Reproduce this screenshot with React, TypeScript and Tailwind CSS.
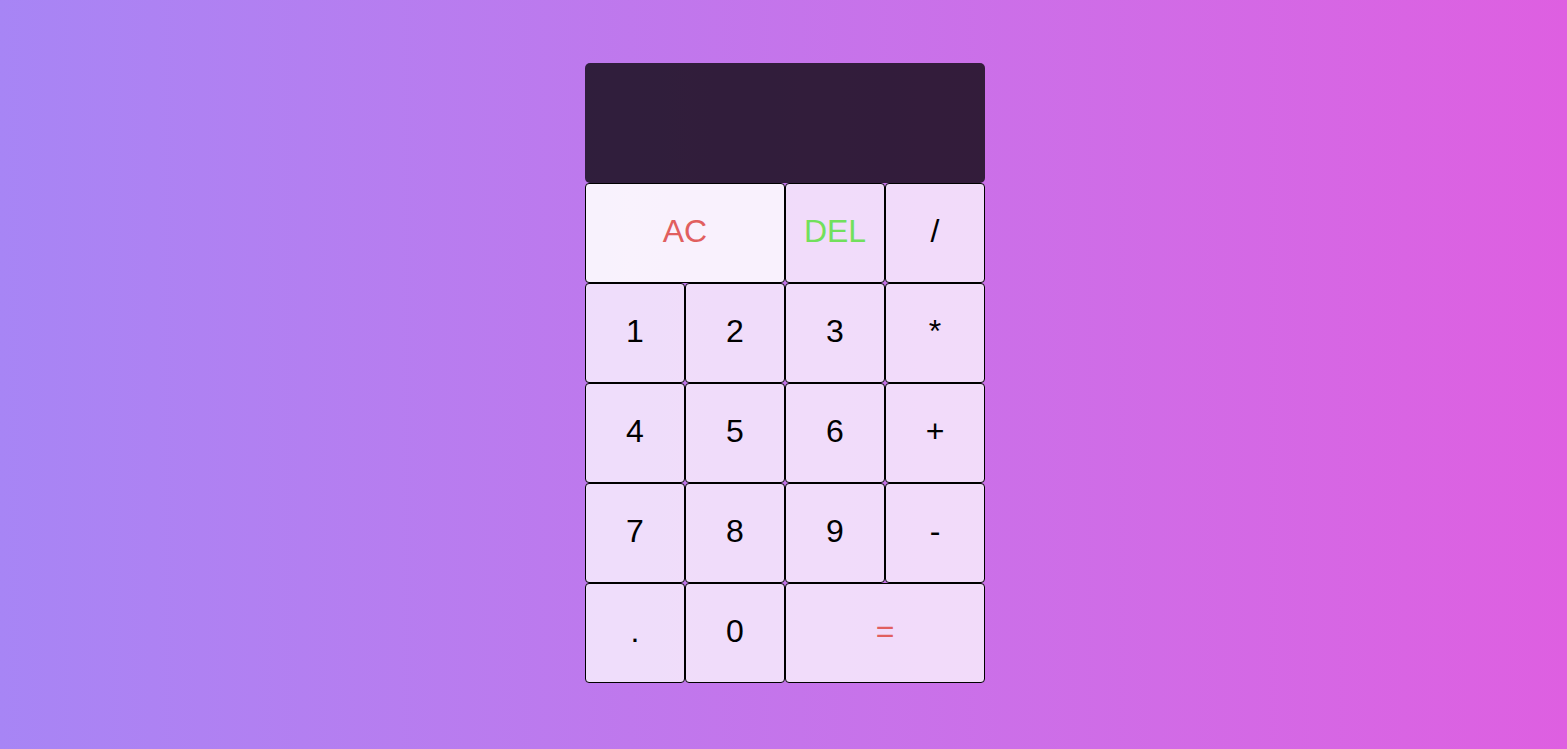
import React from 'react';

interface KeyProps {
  label: string;
  span?: boolean;
  tone?: 'red' | 'green';
  active?: boolean;
}

const Key: React.FC<KeyProps> = ({ label, span, tone, active }) => (
  <button
    className={[
      'border border-black rounded-[4px] text-[32px] leading-none pb-[4px] cursor-pointer outline-none',
      span ? 'col-span-2' : '',
      active ? 'bg-white/90' : 'bg-white/75',
      tone === 'red' ? 'text-[#e15f5f]' : tone === 'green' ? 'text-[#72e05c]' : 'text-black',
    ].join(' ')}
  >
    {label}
  </button>
);

const App: React.FC = () => {
  return (
    <div
      className="min-h-screen w-full flex items-start justify-center pt-[63px] pl-[3px] bg-gradient-to-r from-[#a785f5] to-[#de5fe1]"
      style={{ fontFamily: '"Liberation Sans", Arial, sans-serif' }}
    >
      <div className="grid grid-cols-[repeat(4,100px)] grid-rows-[120px_repeat(5,100px)]">
        {/* Display */}
        <div className="col-span-4 bg-black/75 rounded-[5px]"></div>

        <Key label="AC" span tone="red" active />
        <Key label="DEL" tone="green" />
        <Key label="/" />

        <Key label="1" />
        <Key label="2" />
        <Key label="3" />
        <Key label="*" />

        <Key label="4" />
        <Key label="5" />
        <Key label="6" />
        <Key label="+" />

        <Key label="7" />
        <Key label="8" />
        <Key label="9" />
        <Key label="-" />

        <Key label="." />
        <Key label="0" />
        <Key label="=" span tone="red" />
      </div>
    </div>
  );
};

export default App;
